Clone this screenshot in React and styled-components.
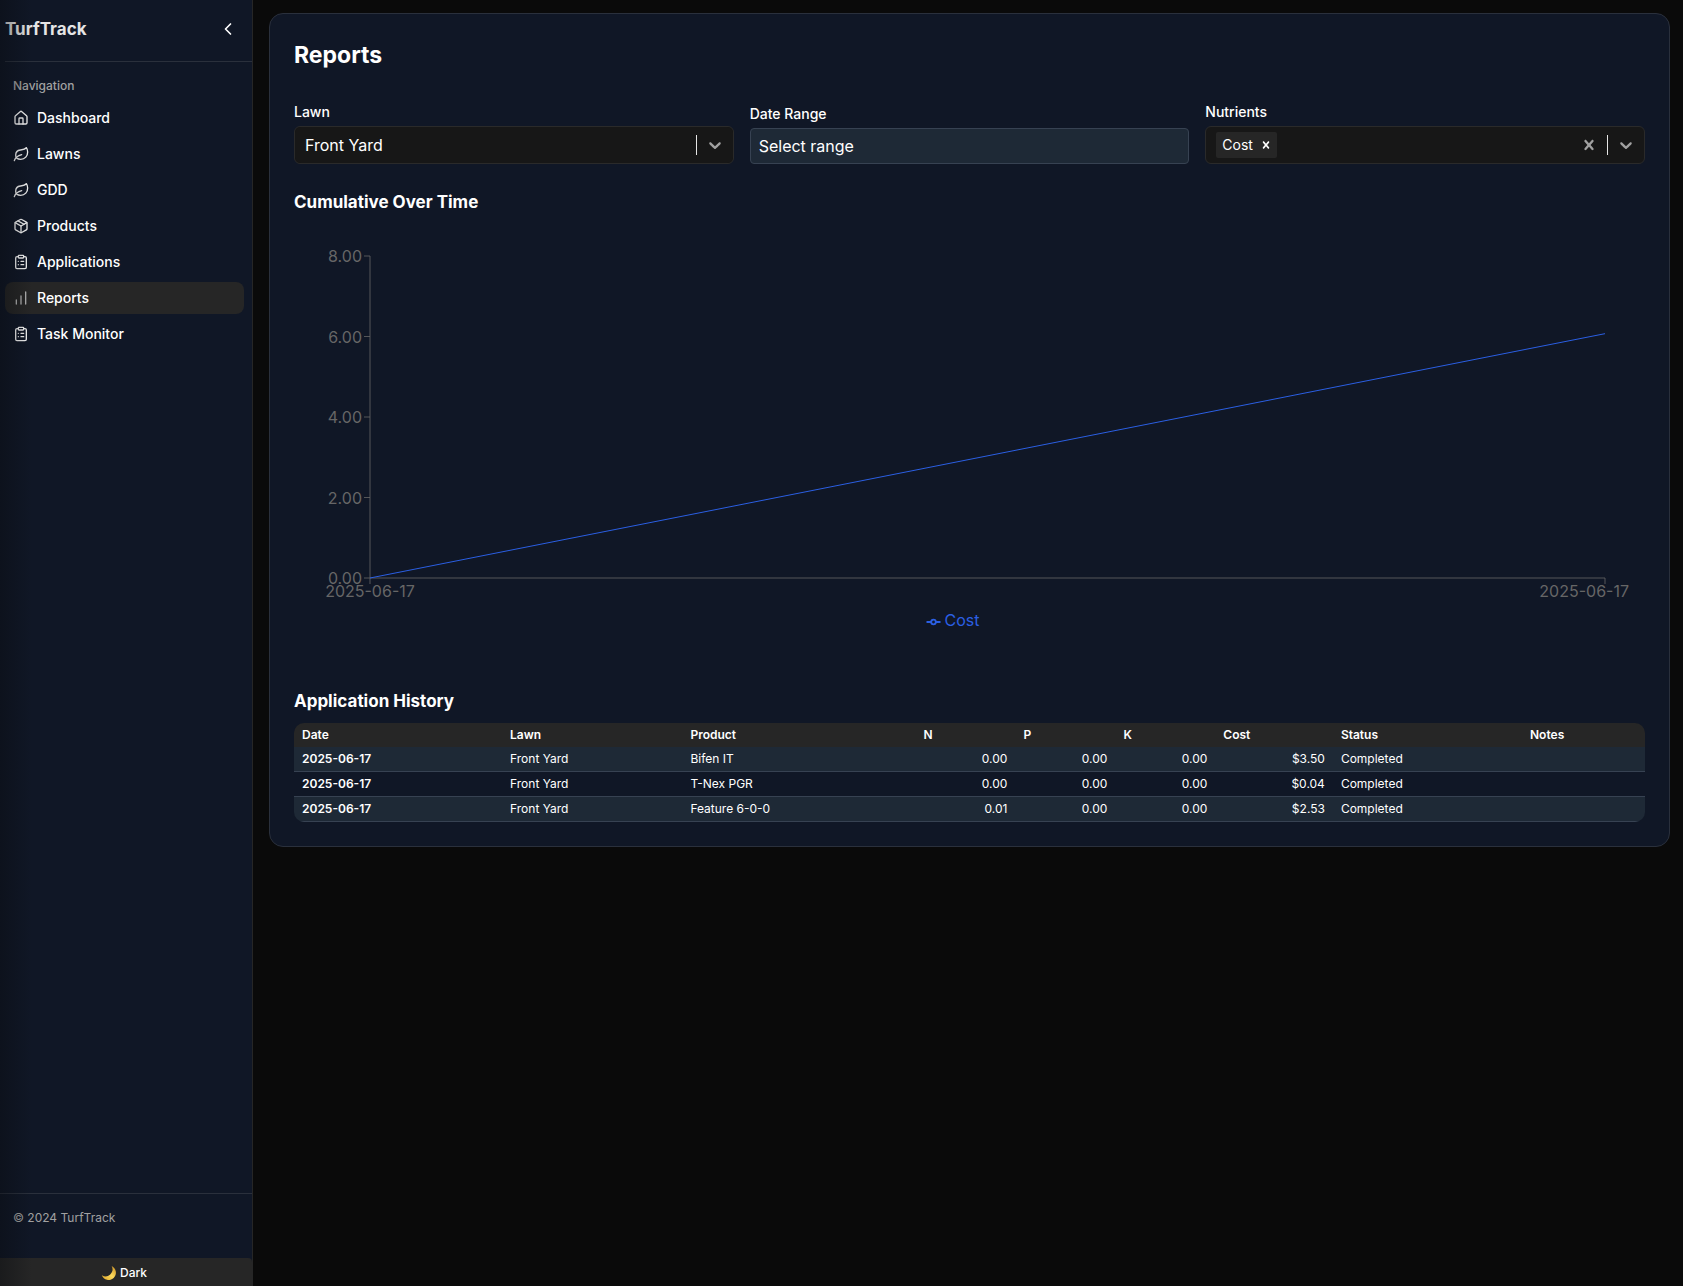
import React, { useLayoutEffect, useRef, useState } from 'react';
import styled, { createGlobalStyle, css } from 'styled-components';
import { ChevronLeft, House, Package, ClipboardList, ChartNoAxesColumnIncreasing } from 'lucide-react';

const color = {
  page: '#0a0a0a',
  panel: '#101726',
  line: '#2a303c',
  field: '#171717',
  fieldLine: '#2a2a2a',
  muted: '#262626',
  slate: '#1e2936',
  slateLine: '#374252',
  text: '#ffffff',
  dim: '#a1a1a1',
  tick: '#666666',
  blue: '#2b5fe3',
};

const GlobalStyle = createGlobalStyle`
  *, *::before, *::after { box-sizing: border-box; }
  body {
    margin: 0;
    background: ${color.page};
    color: ${color.text};
    font-family: Inter, "Liberation Sans", sans-serif;
    font-size: 16px;
    line-height: 24px;
  }
  button, input, select { font: inherit; color: inherit; }
  h1, h2, ul { margin: 0; padding: 0; }
`;

const Layout = styled.div`
  display: flex;
  min-height: 100vh;
`;

const Sidebar = styled.aside`
  position: sticky;
  top: 0;
  display: flex;
  flex-direction: column;
  flex: 0 0 253px;
  height: 100vh;
  background: ${color.panel};
  border-right: 1px solid ${color.muted};

  &::after {
    content: '';
    position: absolute;
    inset: 0 auto 0 0;
    width: 32px;
    background: linear-gradient(to right, rgba(8, 10, 14, 0.4), rgba(8, 10, 14, 0));
    pointer-events: none;
  }
`;

const Brand = styled.div`
  display: flex;
  align-items: center;
  justify-content: space-between;
  height: 62px;
  margin-left: 5px;
  padding: 0 14px 4px 0;
  border-bottom: 1px solid ${color.line};
  color: #e5e5e5;
  font-size: 17px;
  font-weight: 700;
`;

const IconButton = styled.button`
  display: flex;
  padding: 0;
  border: 0;
  background: none;
  color: ${color.text};
  cursor: pointer;
`;

const Nav = styled.nav`
  display: flex;
  flex: 1;
  flex-direction: column;
  padding: 8px 8px 8px 5px;
`;

const NavTitle = styled.div`
  height: 32px;
  padding: 0 8px;
  color: ${color.dim};
  font-size: 12px;
  font-weight: 500;
  line-height: 32px;
`;

const NavList = styled.ul`
  display: flex;
  flex-direction: column;
  gap: 4px;
  list-style: none;
`;

const NavLink = styled.a`
  display: flex;
  align-items: center;
  gap: 8px;
  height: 32px;
  padding: 0 8px;
  border-radius: 8px;
  background: ${(p) => (p.$active ? color.muted : 'transparent')};
  font-size: 14px;
  font-weight: 500;
  color: ${color.text};
  text-decoration: none;

  svg { color: ${(p) => (p.$active ? '#b0b0b0' : '#f5f5f5')}; }
`;

const Copyright = styled.footer`
  height: 65px;
  padding: 16px 13px;
  border-top: 1px solid ${color.line};
  color: ${color.dim};
  font-size: 12px;
  line-height: 16px;
`;

const ThemeButton = styled.button`
  height: 28px;
  padding: 2px 4px 0 0;
  border: 0;
  border-radius: 0 4px 0 0;
  background: ${color.muted};
  font-size: 12px;
  font-weight: 500;
  cursor: pointer;
`;

const ThemeContent = styled.span`
  display: flex;
  align-items: center;
  justify-content: center;
  gap: 3px;
`;

const Main = styled.main`
  flex: 1;
  min-width: 0;
  padding: 13px 13px 13px 16px;
`;

const Card = styled.section`
  padding: 24px;
  border: 1px solid ${color.line};
  border-radius: 14px;
  background: ${color.panel};
`;

const Title = styled.h1`
  margin-bottom: 30px;
  font-size: 23px;
  font-weight: 700;
  line-height: 34px;
`;

const Heading = styled.h2`
  margin-bottom: 8px;
  font-size: 17px;
  font-weight: 700;
  line-height: 28px;
`;

const Filters = styled.div`
  display: grid;
  grid-template-columns: repeat(3, minmax(0, 1fr));
  align-items: end;
  gap: 16px;
  margin-bottom: 24px;
`;

const Field = styled.div`
  display: flex;
  flex-direction: column;
  gap: 4px;
`;

const Label = styled.label`
  font-size: 14px;
  font-weight: 500;
  line-height: 20px;
`;

const box = css`
  border: 1px solid ${color.fieldLine};
  border-radius: 6px;
  background: ${color.field};
`;

const SelectBox = styled.div`
  ${box}
  display: grid;
  height: 38px;
`;

const Select = styled.select`
  grid-area: 1 / 1;
  width: 100%;
  padding: 0 48px 0 10px;
  border: 0;
  border-radius: 6px;
  background: ${color.field};
  appearance: none;
`;

const Indicators = styled.div`
  display: flex;
  align-items: stretch;
`;

const SelectIndicators = styled(Indicators)`
  grid-area: 1 / 1;
  justify-self: end;
  pointer-events: none;
`;

const Separator = styled.span`
  width: 1px;
  margin: 8px 0;
  background: #e5e5e5;
`;

const Indicator = styled.span`
  display: flex;
  padding: 8px;
  color: ${color.dim};
`;

const IndicatorButton = styled(IconButton)`
  padding: 8px;
  color: ${color.dim};
`;

const DateInput = styled.input`
  width: 100%;
  height: 36px;
  padding: 0 8px;
  border: 1px solid ${color.slateLine};
  border-radius: 4px;
  background: ${color.slate};
  cursor: pointer;

  &::placeholder { color: ${color.text}; opacity: 1; }
`;

const MultiBox = styled.div`
  ${box}
  display: flex;
  height: 38px;
`;

const Values = styled.div`
  display: flex;
  flex: 1;
  align-items: center;
  gap: 4px;
  min-width: 0;
  padding: 0 10px;
`;

const Chip = styled.span`
  display: flex;
  align-items: center;
  gap: 6px;
  height: 26px;
  padding: 0 4px 0 6px;
  border-radius: 2px;
  background: ${color.muted};
  font-size: 14px;
`;

const MultiInput = styled.input`
  flex: 1;
  min-width: 0;
  padding: 0;
  border: 0;
  outline: 0;
  background: transparent;
`;

const ChartArea = styled.div`
  height: 439px;
  margin-bottom: 24px;
`;

const ChartSvg = styled.svg`
  display: block;
  width: 100%;
  height: 100%;
  font-size: 16px;
`;

const TableFrame = styled.div`
  overflow: hidden;
  border-radius: 10px;
`;

const Table = styled.table`
  width: 100%;
  table-layout: fixed;
  border-collapse: separate;
  border-spacing: 0;
  font-size: 12px;
  line-height: 16px;
`;

const Col = styled.col`
  width: ${(p) => p.$width}%;
`;

const Th = styled.th`
  padding: 4px 8px;
  background: ${color.muted};
  font-weight: 600;
  text-align: left;
`;

const Tr = styled.tr`
  background: ${(p) => (p.$striped ? color.slate : 'transparent')};
`;

const Td = styled.td`
  padding: 4px 8px;
  border-bottom: 1px solid ${color.slateLine};
  font-weight: ${(p) => (p.$strong ? 600 : 400)};
  text-align: ${(p) => (p.$number ? 'right' : 'left')};
`;

const Leaf = ({ size, strokeWidth }) => (
  <svg
    width={size}
    height={size}
    viewBox="0 0 24 24"
    fill="none"
    stroke="currentColor"
    strokeWidth={strokeWidth}
    strokeLinecap="round"
    strokeLinejoin="round"
    aria-hidden="true"
  >
    <path d="M20 2.500C18 5.200 15 5.500 11 6C7 6.500 4 9.500 4 14C4 17.200 6.500 20 11.500 20C18 20 22 15 22 9C22 6 21.200 4.200 20 2.500Z" />
    <path d="M2 22C3 18.500 7 14.500 13 13" />
  </svg>
);

const Chevron = () => (
  <svg width="20" height="20" viewBox="0 0 20 20" fill="currentColor" aria-hidden="true">
    <path d="M4.516 7.548c0.436-0.446 1.043-0.481 1.576 0l3.908 3.747 3.908-3.747c0.533-0.481 1.141-0.446 1.574 0 0.436 0.445 0.408 1.197 0 1.615-0.406 0.418-4.695 4.502-4.695 4.502-0.217 0.223-0.502 0.335-0.787 0.335s-0.57-0.112-0.789-0.335c0 0-4.287-4.084-4.695-4.502s-0.436-1.17 0-1.615z" />
  </svg>
);

const Cross = ({ size }) => (
  <svg width={size} height={size} viewBox="0 0 20 20" fill="currentColor" aria-hidden="true">
    <path d="M14.348 14.849c-0.469 0.469-1.229 0.469-1.697 0l-2.651-3.030-2.651 3.029c-0.469 0.469-1.229 0.469-1.697 0-0.469-0.469-0.469-1.229 0-1.697l2.758-3.15-2.759-3.152c-0.469-0.469-0.469-1.228 0-1.697s1.228-0.469 1.697 0l2.652 3.031 2.651-3.031c0.469-0.469 1.228-0.469 1.697 0s0.469 1.229 0 1.697l-2.758 3.152 2.758 3.15c0.469 0.469 0.469 1.229 0 1.698z" />
  </svg>
);

const Moon = () => (
  <svg width="16" height="16" viewBox="0 0 16 16" aria-hidden="true">
    <defs>
      <linearGradient id="moon" x1="0" y1="1" x2="1" y2="0">
        <stop offset="0" stopColor="#e0a526" />
        <stop offset="0.5" stopColor="#fbd95c" />
        <stop offset="1" stopColor="#c98a1c" />
      </linearGradient>
    </defs>
    <path d="M10.6 1A7.3 7.3 0 1 1 .8 10.3 A7 7 0 0 0 10.6 1Z" fill="url(#moon)" />
  </svg>
);

const navItems = [
  { label: 'Dashboard', icon: House },
  { label: 'Lawns', icon: Leaf },
  { label: 'GDD', icon: Leaf },
  { label: 'Products', icon: Package },
  { label: 'Applications', icon: ClipboardList },
  { label: 'Reports', icon: ChartNoAxesColumnIncreasing, active: true },
  { label: 'Task Monitor', icon: ClipboardList },
];

const columns = [
  ['Date', 15.4],
  ['Lawn', 13.35],
  ['Product', 17.25],
  ['N', 7.4],
  ['P', 7.4],
  ['K', 7.4],
  ['Cost', 8.7],
  ['Status', 14],
  ['Notes', 9.1],
];

const history = [
  ['2025-06-17', 'Front Yard', 'Bifen IT', '0.00', '0.00', '0.00', '$3.50', 'Completed', ''],
  ['2025-06-17', 'Front Yard', 'T-Nex PGR', '0.00', '0.00', '0.00', '$0.04', 'Completed', ''],
  ['2025-06-17', 'Front Yard', 'Feature 6-0-0', '0.01', '0.00', '0.00', '$2.53', 'Completed', ''],
];

const plot = { top: 32, left: 76, right: 40, height: 322, max: 8 };
const points = [
  { date: '2025-06-17', cost: 0 },
  { date: '2025-06-17', cost: 6.07 },
];

function Chart() {
  const ref = useRef(null);
  const [width, setWidth] = useState(1200);

  useLayoutEffect(() => {
    const measure = () => setWidth(ref.current.clientWidth);
    measure();
    const observer = new ResizeObserver(measure);
    observer.observe(ref.current);
    return () => observer.disconnect();
  }, []);

  const bottom = plot.top + plot.height;
  const end = width - plot.right;
  const x = (i) => plot.left + ((end - plot.left) * i) / (points.length - 1);
  const y = (v) => bottom - (v / plot.max) * plot.height;
  const middle = (plot.left + end) / 2;

  return (
    <ChartArea ref={ref}>
      <ChartSvg role="img" aria-label="Cumulative cost over time">
        <g stroke={color.tick} strokeOpacity="0.8">
          <path d={`M${plot.left} ${plot.top}V${bottom}H${end}`} fill="none" />
          {[0, 2, 4, 6, 8].map((v) => (
            <path key={v} d={`M${plot.left - 6} ${y(v)}h6`} />
          ))}
          {points.map((p, i) => (
            <path key={i} d={`M${x(i)} ${bottom}v6`} />
          ))}
        </g>
        <g fill={color.tick}>
          {[0, 2, 4, 6, 8].map((v) => (
            <text key={v} x={plot.left - 8} y={y(v) + 6} textAnchor="end">{v.toFixed(2)}</text>
          ))}
          {points.map((p, i) => {
            const last = i === points.length - 1;
            return (
              <text key={i} x={last ? width - 16 : x(i)} y={bottom + 19} textAnchor={last ? 'end' : 'middle'}>
                {p.date}
              </text>
            );
          })}
        </g>
        <polyline points={points.map((p, i) => `${x(i)},${y(p.cost)}`).join(' ')} fill="none" stroke={color.blue} />
        <g transform={`translate(${middle - 61} ${bottom + 44})`} stroke={color.blue} strokeWidth="1.8" fill="none">
          <path d="M0 0h5M9 0h5" />
          <circle cx="7" cy="0" r="2.3" />
        </g>
        <text x={middle - 43} y={bottom + 48} fill={color.blue}>Cost</text>
      </ChartSvg>
    </ChartArea>
  );
}

export default function App() {
  return (
    <>
      <GlobalStyle />
      <Layout>
        <Sidebar>
          <Brand>
            TurfTrack
            <IconButton type="button" aria-label="Collapse sidebar">
              <ChevronLeft size={20} />
            </IconButton>
          </Brand>
          <Nav>
            <NavTitle>Navigation</NavTitle>
            <NavList>
              {navItems.map(({ label, icon: Icon, active }) => (
                <li key={label}>
                  <NavLink href="#" $active={active} aria-current={active ? 'page' : undefined}>
                    <Icon size={16} strokeWidth={2} />
                    {label}
                  </NavLink>
                </li>
              ))}
            </NavList>
          </Nav>
          <Copyright>© 2024 TurfTrack</Copyright>
          <ThemeButton type="button">
            <ThemeContent><Moon />Dark</ThemeContent>
          </ThemeButton>
        </Sidebar>
        <Main>
          <Card>
            <Title>Reports</Title>
            <Filters>
              <Field>
                <Label htmlFor="lawn">Lawn</Label>
                <SelectBox>
                  <Select id="lawn" defaultValue="Front Yard">
                    <option>Front Yard</option>
                  </Select>
                  <SelectIndicators>
                    <Separator />
                    <Indicator><Chevron /></Indicator>
                  </SelectIndicators>
                </SelectBox>
              </Field>
              <Field>
                <Label htmlFor="range">Date Range</Label>
                <DateInput id="range" placeholder="Select range" readOnly />
              </Field>
              <Field>
                <Label htmlFor="nutrients">Nutrients</Label>
                <MultiBox>
                  <Values>
                    <Chip>
                      Cost
                      <IconButton type="button" aria-label="Remove Cost"><Cross size={14} /></IconButton>
                    </Chip>
                    <MultiInput id="nutrients" />
                  </Values>
                  <Indicators>
                    <IndicatorButton type="button" aria-label="Clear nutrients"><Cross size={20} /></IndicatorButton>
                    <Separator />
                    <IndicatorButton type="button" aria-label="Show nutrients"><Chevron /></IndicatorButton>
                  </Indicators>
                </MultiBox>
              </Field>
            </Filters>
            <Heading>Cumulative Over Time</Heading>
            <Chart />
            <Heading>Application History</Heading>
            <TableFrame>
              <Table>
                <colgroup>
                  {columns.map(([name, width]) => <Col key={name} $width={width} />)}
                </colgroup>
                <thead>
                  <tr>{columns.map(([name]) => <Th key={name} scope="col">{name}</Th>)}</tr>
                </thead>
                <tbody>
                  {history.map((row, r) => (
                    <Tr key={r} $striped={r % 2 === 0}>
                      {row.map((cell, c) => (
                        <Td key={c} $strong={c === 0} $number={c > 2 && c < 7}>{cell}</Td>
                      ))}
                    </Tr>
                  ))}
                </tbody>
              </Table>
            </TableFrame>
          </Card>
        </Main>
      </Layout>
    </>
  );
}
